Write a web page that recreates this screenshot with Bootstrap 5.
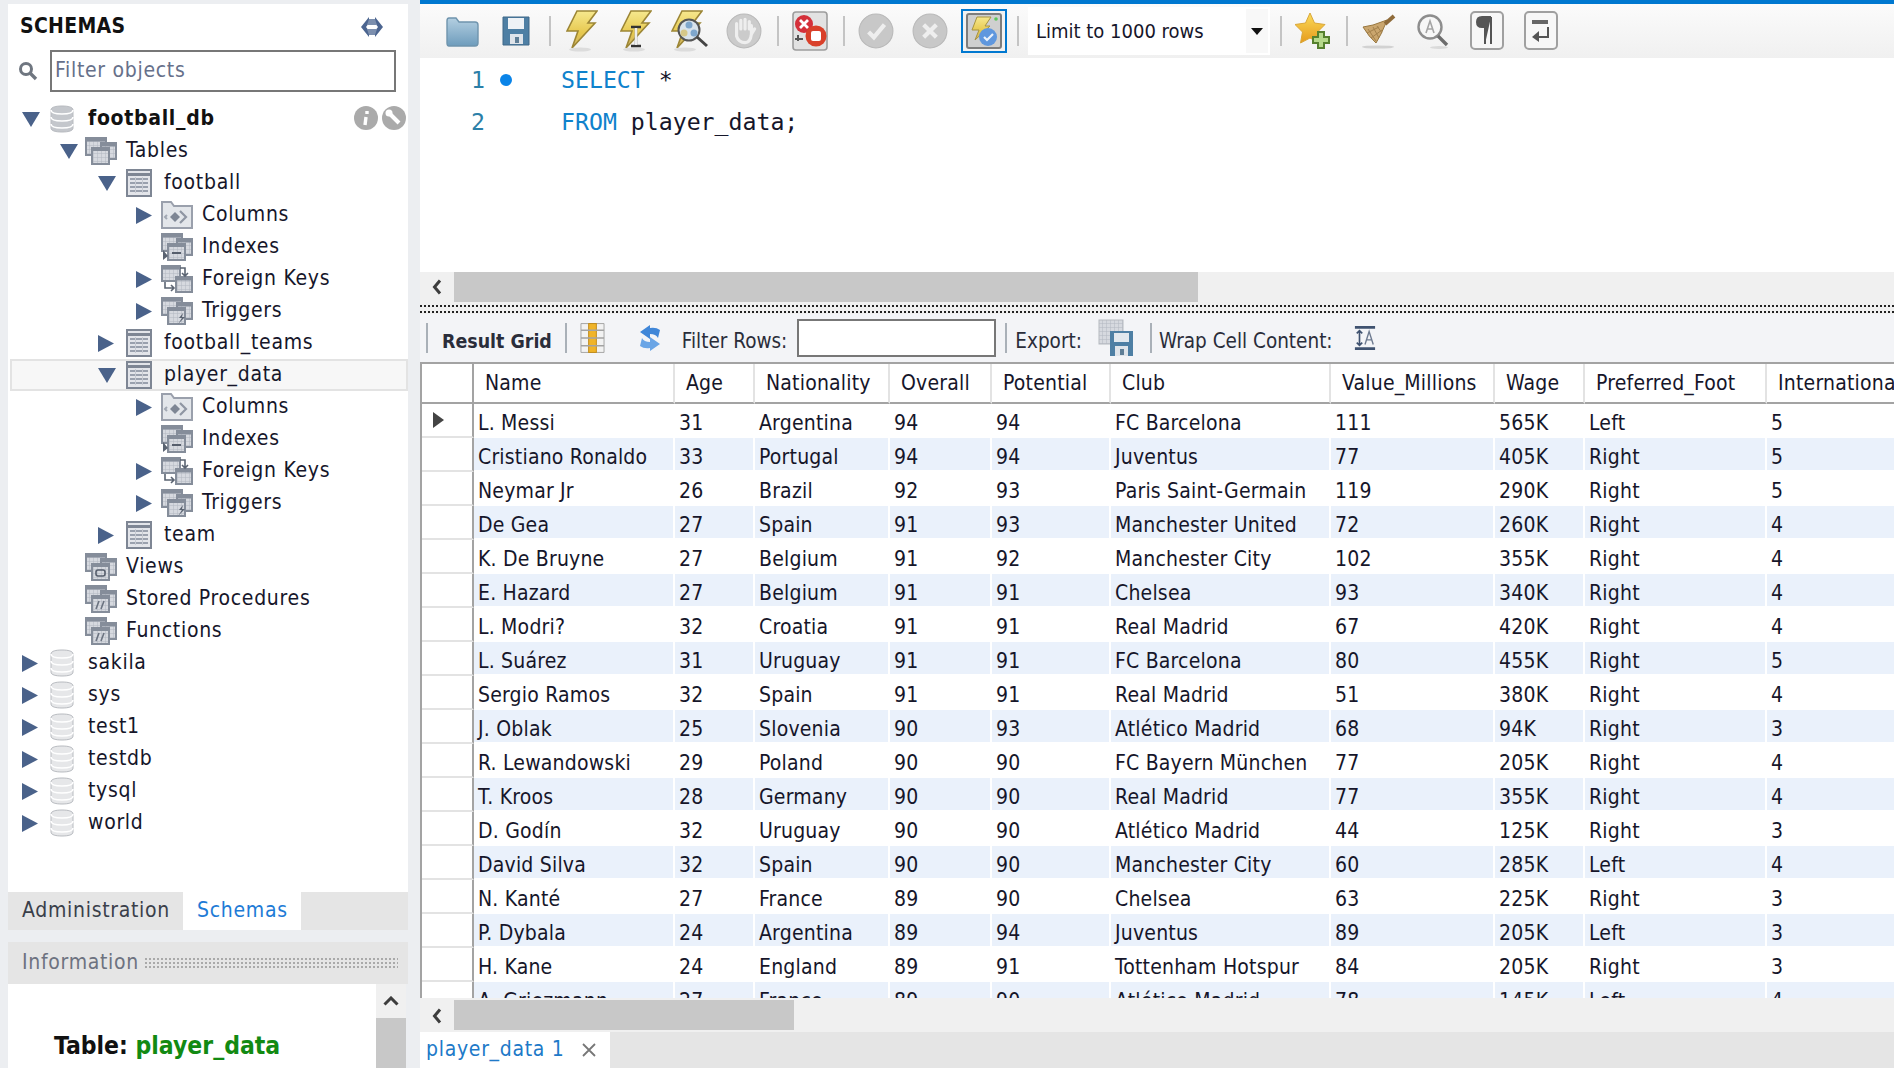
<!DOCTYPE html>
<html lang="en">
<head>
  <meta charset="UTF-8" />
  <meta name="viewport" content="width=device-width, initial-scale=1" />
  <title>MySQL Workbench</title>
  <link href="https://cdn.jsdelivr.net/npm/bootstrap@5.3.0/dist/css/bootstrap.min.css" rel="stylesheet" />
  <style>
    html, body { height: 100%; }
    body {
      background: #eceef1;
      color: #16162a;
      font-family: "DejaVu Sans Condensed", "DejaVu Sans", sans-serif;
      font-size: 21px;
      letter-spacing: .7px;
      overflow: hidden;
    }
    svg { display: block; flex: none; }
    .wb-shell { width: 1894px; height: 1068px; }

    /* left panel */
    .wb-side { width: 420px; padding: 4px 12px 0 8px; flex: none; }
    .wb-head { height: 46px; background: #fff; padding: 0 24px 0 12px; }
    .wb-head b { font-size: 21px; letter-spacing: .3px; color: #111; }
    .wb-filter { height: 51px; background: #fff; padding: 0 12px 9px 10px; gap: 12px; }
    .wb-filter .form-control {
      height: 42px; border: 2px solid #777; border-radius: 0; padding: 0 3px 2px;
      font-size: 21px; letter-spacing: .7px; color: #16162a; background: #fff; box-shadow: none;
    }
    .wb-filter .form-control::placeholder { color: #66708a; opacity: 1; }
    .wb-tree { background: #fff; height: 791px; padding-top: 2px; position: relative; }
    .wb-row { height: 32px; white-space: nowrap; }
    .wb-row.is-sel { background: #f7f7f7; box-shadow: inset 0 0 0 2px #e3e3e3; margin-left: 2px; }
    .wb-row.is-bold { font-weight: 700; color: #111; }
    .wb-arrow { width: 28px; }
    .wb-icon { width: 38px; }
    .wb-icon.is-wide svg { margin-left: -3px; }
    .wb-dbtools { position: absolute; top: 5px; right: 2px; gap: 4px; }

    .wb-tabs { height: 38px; background: #e5e5e5; }
    .wb-tabs .nav-link {
      height: 38px; padding: 0 13px 0 14px; line-height: 36px; border-radius: 0;
      color: #3a3f4a; font-size: 21px;
    }
    .wb-tabs .nav-link.active { background: #fff; color: #1e7bd6; }
    .wb-infohead { height: 42px; margin-top: 12px; background: #e5e5e5; padding: 0 10px 0 14px; gap: 5px; color: #6d7280; }
    .wb-dots {
      height: 12px; flex: 1;
      background-image: radial-gradient(circle, #a9a9a9 1px, transparent 1.2px);
      background-size: 4px 4px;
    }
    .wb-info { height: 84px; }
    .wb-infotext { background: #fff; width: 368px; padding: 48px 0 0 46px; font-size: 24.5px; letter-spacing: 0; font-weight: 700; color: #111; line-height: 28px; overflow: hidden; }
    .wb-infotext span { color: #128a12; }
    .wb-vscroll { width: 30px; background: #f0f0f0; }
    .wb-vscroll .wb-up { height: 34px; }
    .wb-vscroll .wb-thumb { background: #c8c8c8; }

    /* main column */
    .wb-main { width: 1474px; flex: none; background: #fff; }
    .wb-blue { height: 4px; background: #0078d0; }
    .wb-tools { height: 54px; padding-left: 15px; background: linear-gradient(#fbfbfb, #f0f0f0); }
    .wb-tbtn { width: 54px; height: 54px; padding: 0; border: 0; border-radius: 0; }
    .wb-tbtn.is-on .wb-onbox { width: 46px; height: 44px; border: 2px solid #0078d0; background: #f2f2f2; }
    .wb-vsep { width: 2px; height: 30px; background: #c4c4c4; margin: 0 4px 0 6px; }
    .wb-limit { width: 242px; height: 48px; margin: 0 4px 0 5px; background: #fff; padding-left: 8px; font-size: 20px; letter-spacing: 0; }
    .wb-limit i { width: 22px; height: 44px; margin-right: 2px; background: #f8f8f8; }
    .wb-editor { height: 214px; padding-top: 1px; font-family: "DejaVu Sans Mono", monospace; font-size: 23.2px; letter-spacing: 0; line-height: 42px; }
    .wb-lnum { width: 65px; text-align: right; color: #2c7fa8; }
    .wb-dotcol { width: 76px; padding-left: 15px; }
    .wb-dot { width: 12px; height: 12px; border-radius: 50%; background: #0a84e8; }
    .wb-kw { color: #0f82cc; }
    .wb-hscroll { background: #f0f0f0; }
    .wb-hscroll .wb-left { width: 34px; }
    .wb-hscroll .wb-thumb { background: #c8c8c8; }
    .wb-hs1 { height: 30px; }
    .wb-hs1 .wb-thumb { width: 744px; }
    .wb-split { height: 12px; background: #f0f0f0; padding-top: 3px; }
    .wb-split div { height: 8px; border-top: 2px dotted #222; border-bottom: 2px dotted #222; }

    .wb-rtools { height: 48px; background: #f3f4f7; font-size: 20.5px; letter-spacing: 0; color: #2a2d3a; padding-left: 6px; }
    .wb-rtools span, .wb-rtools b { padding-top: 7px; white-space: nowrap; }
    .wb-rtools b { font-size: 19.4px; }
    .wb-rsep { width: 2px; height: 30px; background: #a9b0b8; flex: none; }
    .wb-rtools .form-control { width: 199px; flex: none; height: 38px; border: 2px solid #777; border-radius: 0; background: #fff; box-shadow: none; }
    .rt-title { margin-left: 14px; }
    .rt-sep1 { margin-left: 13px; }
    .rt-form { margin-left: 13px; }
    .rt-refresh { margin-left: 29px; }
    .rt-filter { margin-left: 16px; }
    .rt-input { margin-left: 10px; }
    .rt-sep2 { margin-left: 9px; }
    .rt-export { margin-left: 8px; }
    .rt-exicon { margin-left: 16px; }
    .rt-sep3 { margin-left: 16px; }
    .rt-wrap { margin-left: 7px; }
    .rt-wricon { margin-left: 21px; }

    /* result grid */
    .wb-grid { height: 636px; overflow: hidden; border-left: 2px solid #a3a3a3; border-top: 2px solid #a3a3a3; }
    .wb-table { width: 1583px; table-layout: fixed; border-collapse: separate; border-spacing: 0; font-size: 21px; letter-spacing: .2px; color: #16162a; }
    .wb-table > thead > tr > th {
      height: 40px; padding: 0 0 3px 11px; font-weight: 400; background: #fff; box-shadow: none;
      border-right: 2px solid #e3e3e3; border-bottom: 2px solid #a3a3a3; white-space: nowrap; overflow: hidden; color: #16162a;
    }
    .wb-table > tbody > tr > td {
      height: 34px; padding: 6px 0 0 4px; line-height: 26px; background: #fff; box-shadow: none; color: #16162a;
      border-right: 2px solid #fff; border-bottom: 2px solid #fff; white-space: nowrap; overflow: hidden; vertical-align: top;
    }
    .wb-table > tbody > tr:nth-child(even) > td { background: #eaf1fb; }
    .wb-table > tbody > tr > td:first-child, .wb-table > tbody > tr:nth-child(even) > td:first-child {
      background: #fff; padding: 8px 0 0 11px; border-right: 2px solid #a3a3a3; border-bottom: 2px solid #e3e3e3;
    }
    .wb-table > thead > tr > th:first-child { border-right: 2px solid #a3a3a3; }
    .wb-hs2 { height: 34px; padding-top: 2px; }
    .wb-hs2 .wb-thumb { width: 340px; height: 30px; }
    .wb-qtabs { height: 36px; background: #e5e5e5; }
    .wb-qtab { width: 190px; background: #fff; color: #2079c8; padding-left: 6px; gap: 16px; }
  </style>
</head>
<body>
  <!-- icon sheet -->
  <svg width="0" height="0" style="position:absolute">
    <defs>
      <linearGradient id="gFolder" x1="0" y1="0" x2="0" y2="1"><stop offset="0" stop-color="#b4cfe1"/><stop offset="1" stop-color="#6e9cbc"/></linearGradient>
      <linearGradient id="gBolt" x1="0" y1="0" x2="0" y2="1"><stop offset="0" stop-color="#f6e88e"/><stop offset=".6" stop-color="#e6c84e"/><stop offset="1" stop-color="#cbb06a"/></linearGradient>
      <linearGradient id="gStar" x1="0" y1="0" x2="0" y2="1"><stop offset="0" stop-color="#fbdc5a"/><stop offset="1" stop-color="#e69a1c"/></linearGradient>
      <pattern id="pGrid" width="4" height="4" patternUnits="userSpaceOnUse"><rect width="4" height="4" fill="#d6d9df"/><path d="M4 0H0V4" fill="none" stroke="#b3b8c1" stroke-width="1"/></pattern>
    </defs>
    <symbol id="i-down" viewBox="0 0 18 15"><path d="M0 0H18L9 15Z" fill="#4a628a"/></symbol>
    <symbol id="i-right" viewBox="0 0 16 17"><path d="M0 0L16 8.5L0 17Z" fill="#4a628a"/></symbol>
    <symbol id="i-db" viewBox="0 0 24 28">
      <path d="M1 5C1 2 6 1 12 1S23 2 23 5V23C23 26 18 27 12 27S1 26 1 23Z" fill="currentColor" stroke="#b8bbc0"/>
      <path d="M1 5C1 8 6 9 12 9S23 8 23 5M1 12C1 15 6 16 12 16S23 15 23 12M1 19C1 22 6 23 12 23S23 22 23 19" fill="none" stroke="#fff" stroke-width="1.6"/>
    </symbol>
    <symbol id="i-table" viewBox="0 0 26 28">
      <rect x="1" y="1" width="24" height="26" fill="#e3e5ea" stroke="#7e8694" stroke-width="2"/>
      <path d="M2 5.500H24" stroke="#7e8694" stroke-width="3"/>
      <path d="M4 10H22M4 14H22M4 18H22M4 22H22" stroke="#9aa1ae" stroke-width="2"/>
      <path d="M9.500 8V24M16.500 8V24" stroke="#c6cad2" stroke-width="1"/>
    </symbol>
    <symbol id="i-group" viewBox="0 0 32 28">
      <rect x="1" y="1" width="20" height="17" fill="url(#pGrid)" stroke="#858d9a" stroke-width="2"/>
      <path d="M1 3H21" stroke="#858d9a" stroke-width="3"/>
      <rect x="16" y="6" width="15" height="16" fill="url(#pGrid)" stroke="#858d9a" stroke-width="2"/>
      <path d="M16 8H31" stroke="#858d9a" stroke-width="3"/>
      <rect x="7" y="11" width="17" height="16" fill="url(#pGrid)" stroke="#858d9a" stroke-width="2"/>
      <path d="M7 12.500H24" stroke="#858d9a" stroke-width="3"/>
    </symbol>
    <symbol id="i-columns" viewBox="0 0 32 28">
      <path d="M1 27V1H10L13 5H31V27Z" fill="#e3e6ea" stroke="#9aa0ac" stroke-width="2"/>
      <path d="M9 16L14 11L19 16L14 21Z" fill="#7e8694"/><path d="M19 10L25 16L19 22" fill="none" stroke="#8f96a3" stroke-width="2.200"/><path d="M6 14L4 16L6 18" fill="none" stroke="#a2a8b3" stroke-width="2"/>
    </symbol>
    <symbol id="i-indexes" viewBox="0 0 32 28">
      <use href="#i-group"/><path d="M11 20H20" stroke="#565e6c" stroke-width="2"/><path d="M2 17V27L7 23Z" fill="#5b6472"/>
    </symbol>
    <symbol id="i-fkeys" viewBox="0 0 32 28">
      <rect x="1" y="1" width="18" height="15" fill="url(#pGrid)" stroke="#858d9a" stroke-width="2"/>
      <path d="M1 3H19" stroke="#858d9a" stroke-width="3"/>
      <rect x="15" y="12" width="16" height="15" fill="url(#pGrid)" stroke="#858d9a" stroke-width="2"/>
      <path d="M15 14H31" stroke="#858d9a" stroke-width="3"/>
      <path d="M4 17V23H13M10 20L13 23L10 26M19 3H24V11M21 8L24 11L27 8" fill="none" stroke="#5b6472" stroke-width="1.600"/>
    </symbol>
    <symbol id="i-triggers" viewBox="0 0 32 28">
      <use href="#i-group"/><path d="M22 16L18 21H21L17 27L24 20H21Z" fill="#5b6472"/>
    </symbol>
    <symbol id="i-views" viewBox="0 0 32 28">
      <use href="#i-group"/><rect x="11" y="17" width="9" height="6" rx="2" fill="none" stroke="#565e6c" stroke-width="1.6"/>
    </symbol>
    <symbol id="i-procs" viewBox="0 0 32 28">
      <use href="#i-group"/><path d="M11 24L14 16M16 24L19 16" stroke="#6b7380" stroke-width="1.6"/>
    </symbol>
    <symbol id="i-sync" viewBox="0 0 24 22">
      <path d="M9 1L1 11L9 21V15L6 11L9 7ZM15 1L23 11L15 21V15L18 11L15 7Z" fill="#4c6590"/><path d="M9 3H15L17 9H7ZM7 13H17L15 19H9Z" fill="#7c8fae"/>
    </symbol>
    <symbol id="i-search" viewBox="0 0 20 20">
      <circle cx="8" cy="8" r="5.500" fill="none" stroke="#6f7680" stroke-width="3"/><path d="M12 12L18 18" stroke="#6f7680" stroke-width="3.400"/>
    </symbol>
    <symbol id="i-chev" viewBox="0 0 10 16"><path d="M8 1.500L2.500 8L8 14.500" fill="none" stroke="#3d3d3d" stroke-width="3"/></symbol>
    <symbol id="t-folder" viewBox="0 0 36 34">
      <path d="M3 7Q3 4 5 4H12L15 8H31Q34 8 34 11V29Q34 32 31 32H5Q3 32 3 29Z" fill="url(#gFolder)" stroke="#6f94ad" stroke-width="1.400"/>
    </symbol>
    <symbol id="t-save" viewBox="0 0 28 32">
      <path d="M1 2H27V30H1Z" fill="#4e7fa4" stroke="#3f6888"/><rect x="6" y="3" width="16" height="11" fill="#eef2f6"/><rect x="8" y="19" width="13" height="10" fill="#dfe4ea"/><rect x="13" y="22" width="4" height="6" fill="#5f7e96"/>
    </symbol>
    <symbol id="t-bolt" viewBox="0 0 32 42">
      <path d="M11 1H31L22 13H29L6 38L12 21H1Z" fill="url(#gBolt)" stroke="#9c8636" stroke-width="1.600"/><ellipse cx="14" cy="39.500" rx="11" ry="2" fill="#dcdcdc"/>
    </symbol>
    <symbol id="t-boltcur" viewBox="0 0 32 42">
      <use href="#t-bolt"/><path d="M11 17H21M16 17V35M11 36H21" stroke="#333" stroke-width="2.400"/><path d="M16 18V35" stroke="#eee" stroke-width="2.600"/>
    </symbol>
    <symbol id="t-boltmag" viewBox="0 0 38 42">
      <use href="#t-bolt" width="32" height="42"/><circle cx="18" cy="20" r="10.500" fill="#d9e3ec" stroke="#555" stroke-width="2"/><circle cx="18" cy="15" r="3.500" fill="#7ea6cc"/><circle cx="13" cy="23" r="3.500" fill="#d6c88a"/><circle cx="23" cy="23" r="3.500" fill="#7ea6cc"/><path d="M26 27L36 36" stroke="#444" stroke-width="3"/>
    </symbol>
    <symbol id="t-hand" viewBox="0 0 34 34">
      <circle cx="17" cy="17" r="16" fill="#cbcbcb" stroke="#b9b9b9"/><path d="M10 16V10M14 15V7M18 15V6M22 15V8M24 20L27 15M10 15V22Q12 28 18 28Q23 28 24 20V12" fill="none" stroke="#eee" stroke-width="3" stroke-linecap="round"/>
    </symbol>
    <symbol id="t-stop" viewBox="0 0 36 40">
      <rect x="1" y="1" width="34" height="38" rx="3" fill="#e2e2e2" stroke="#9d9d9d" stroke-width="1.600"/><circle cx="12" cy="13" r="9" fill="#d4303a"/><path d="M8 9L16 17M16 9L8 17" stroke="#fff" stroke-width="2.800"/><circle cx="24" cy="25" r="10.500" fill="#d9402a"/><rect x="19" y="20" width="10" height="10" rx="2" fill="#fff"/><path d="M6 30L6 24M3 28H11" stroke="#555" stroke-width="2"/>
    </symbol>
    <symbol id="t-check" viewBox="0 0 34 34">
      <circle cx="17" cy="17" r="16" fill="#c8c8c8" stroke="#b9b9b9"/><path d="M10 18L15 23L25 11" fill="none" stroke="#eee" stroke-width="4"/>
    </symbol>
    <symbol id="t-cross" viewBox="0 0 34 34">
      <circle cx="17" cy="17" r="16" fill="#c8c8c8" stroke="#b9b9b9"/><path d="M11 11L23 23M23 11L11 23" stroke="#eee" stroke-width="4"/>
    </symbol>
    <symbol id="t-auto" viewBox="0 0 36 36">
      <rect x="1" y="1" width="34" height="34" rx="2" fill="#cfcfcf" stroke="#7d7d7d" stroke-width="2"/>
      <path d="M11 4H25L19 13H24L9 27L13 17H6Z" fill="url(#gBolt)" stroke="#a7933f"/><circle cx="22" cy="24" r="9" fill="#5f97de"/><path d="M18 24L21 27L27 21" fill="none" stroke="#eaf2fc" stroke-width="2.200"/><circle cx="30" cy="6" r="1.800" fill="#5cc85c"/>
    </symbol>
    <symbol id="t-star" viewBox="0 0 36 38">
      <path d="M15 1L19.500 11L30 12.500L22.500 20L24.500 31L15 26L5.500 31L7.500 20L0 12.500L10.500 11Z" fill="url(#gStar)" stroke="#d9a73a"/><path d="M23 20H29V25H34V31H29V36H23V31H18V25H23Z" fill="#b5d98a" stroke="#55802e" stroke-width="2"/>
    </symbol>
    <symbol id="t-broom" viewBox="0 0 36 36">
      <path d="M26 7L12 12L2 14Q8 24 15 30L20 21L24 12Z" fill="#caa66e" stroke="#98773f"/><path d="M24 11L33 3" stroke="#8f6b3a" stroke-width="4"/><path d="M7 16L15 28M12 14L18 25M16 13L21 20M6 20L18 14M10 25L21 17" stroke="#a3814c"/><ellipse cx="17" cy="34" rx="16" ry="1.600" fill="#d2d2d2"/>
    </symbol>
    <symbol id="t-findA" viewBox="0 0 32 36">
      <circle cx="13" cy="14" r="11.500" fill="#f7f7f7" stroke="#8d8d8d" stroke-width="2.400"/><path d="M9 20L13 8L17 20M10.500 16H15.500" fill="none" stroke="#a5a5a5" stroke-width="1.600"/><path d="M21 23L30 32" stroke="#6d6d6d" stroke-width="3.400"/><ellipse cx="22" cy="34.500" rx="9" ry="1.400" fill="#dadada"/>
    </symbol>
    <symbol id="t-para" viewBox="0 0 34 40">
      <rect x="1" y="1" width="32" height="37" rx="4" fill="#f7f7f7" stroke="#a0a0a0" stroke-width="2"/><path d="M21 6H12Q7 6 7 11T12 16H15V33M21 6V33M15 6V33" fill="#555" stroke="#555" stroke-width="2"/>
    </symbol>
    <symbol id="t-wrap" viewBox="0 0 34 40">
      <rect x="1" y="1" width="32" height="37" rx="4" fill="#f7f7f7" stroke="#a0a0a0" stroke-width="2"/><path d="M8 11H24" stroke="#666" stroke-width="4"/><path d="M24 16V26H14" fill="none" stroke="#555" stroke-width="2"/><path d="M15 20L8 26L15 31Z" fill="#555"/>
    </symbol>
    <symbol id="t-form" viewBox="0 0 26 32">
      <path d="M1 1H25V31H1Z" fill="#f2f2f2" stroke="#a3a3a3"/><rect x="9" y="1" width="8" height="30" fill="#f0b429" stroke="#c08a18"/><path d="M1 8H25M1 16H25M1 24H25" stroke="#a3a3a3" stroke-width="1.600"/>
    </symbol>
    <symbol id="t-refresh" viewBox="0 0 32 32">
      <path d="M16 3L6 10L16 17V12Q22 12 24 16L26 8Q22 5 16 6Z" fill="#3f86d8"/><path d="M16 29L26 22L16 15V20Q10 20 8 16L6 24Q10 27 16 26Z" fill="#6aa5e6"/>
    </symbol>
    <symbol id="t-export" viewBox="0 0 36 38">
      <rect x="1" y="1" width="24" height="24" fill="url(#pGrid)" stroke="#b5b9c0"/><path d="M12 12H35V37H12Z" fill="#4e7fa4"/><rect x="16" y="14" width="15" height="9" fill="#e2e8ee"/><rect x="17" y="27" width="13" height="10" fill="#dfe4ea"/><rect x="22" y="30" width="4" height="6" fill="#5f7e96"/>
    </symbol>
    <symbol id="t-cellwrap" viewBox="0 0 24 26">
      <path d="M1 1.500H23M1 24.500H23" stroke="#3f5270" stroke-width="3"/><path d="M6 5V21M3 8L6 5L9 8M3 18L6 21L9 18" fill="none" stroke="#3f5270" stroke-width="1.800"/><path d="M12 20L16.500 6L21 20M13.500 15H19.500" fill="none" stroke="#6d7a90" stroke-width="1.500"/>
    </symbol>
  </svg>

  <div class="wb-shell d-flex">
    <aside class="wb-side d-flex flex-column">
      <div class="wb-head d-flex align-items-center justify-content-between">
        <b>SCHEMAS</b>
        <svg width="24" height="22"><use href="#i-sync"/></svg>
      </div>
      <div class="wb-filter d-flex align-items-center">
        <svg width="20" height="20"><use href="#i-search"/></svg>
        <input class="form-control" type="text" placeholder="Filter objects" />
      </div>
      <div class="wb-tree" id="tree">
        <div class="wb-dbtools d-flex">
          <svg width="24" height="24" viewBox="0 0 24 24"><circle cx="12" cy="12" r="12" fill="#aaa"/><path d="M13 5V8M12 11L11 19" stroke="#fff" stroke-width="3.400"/></svg>
          <svg width="24" height="24" viewBox="0 0 24 24"><circle cx="12" cy="12" r="12" fill="#aaa"/><path d="M7 7L17 17" stroke="#fff" stroke-width="4"/><circle cx="7" cy="7" r="3.500" fill="#fff"/></svg>
        </div>
      </div>
      <ul class="nav wb-tabs">
        <li class="nav-item"><a class="nav-link" href="#">Administration</a></li>
        <li class="nav-item"><a class="nav-link active" href="#">Schemas</a></li>
      </ul>
      <div class="wb-infohead d-flex align-items-center">
        <span>Information</span>
        <div class="wb-dots"></div>
      </div>
      <div class="wb-info d-flex">
        <div class="wb-infotext">Table: <span>player_data</span></div>
        <div class="wb-vscroll d-flex flex-column">
          <div class="wb-up d-flex align-items-center justify-content-center">
            <svg width="16" height="10" viewBox="0 0 16 10"><path d="M1.500 8.500L8 2L14.500 8.500" fill="none" stroke="#3d3d3d" stroke-width="3"/></svg>
          </div>
          <div class="wb-thumb flex-grow-1"></div>
        </div>
      </div>
    </aside>

    <main class="wb-main d-flex flex-column">
      <div class="wb-blue"></div>
      <div class="wb-tools d-flex align-items-center" id="tools"></div>

      <div class="wb-editor">
        <div class="d-flex"><div class="wb-lnum">1</div><div class="wb-dotcol d-flex align-items-center"><div class="wb-dot"></div></div><div><span class="wb-kw">SELECT</span> *</div></div>
        <div class="d-flex"><div class="wb-lnum">2</div><div class="wb-dotcol"></div><div><span class="wb-kw">FROM</span> player_data;</div></div>
      </div>
      <div class="wb-hscroll wb-hs1 d-flex">
        <div class="wb-left d-flex align-items-center justify-content-center"><svg width="10" height="16"><use href="#i-chev"/></svg></div>
        <div class="wb-thumb"></div>
      </div>
      <div class="wb-split"><div></div></div>

      <div class="wb-rtools d-flex align-items-center">
        <div class="wb-rsep"></div>
        <b class="rt-title">Result Grid</b>
        <div class="wb-rsep rt-sep1"></div>
        <svg class="rt-form" width="25" height="32"><use href="#t-form"/></svg>
        <svg class="rt-refresh" width="32" height="32"><use href="#t-refresh"/></svg>
        <span class="rt-filter">Filter Rows:</span>
        <input class="form-control rt-input" type="text" />
        <div class="wb-rsep rt-sep2"></div>
        <span class="rt-export">Export:</span>
        <svg class="rt-exicon" width="36" height="38"><use href="#t-export"/></svg>
        <div class="wb-rsep rt-sep3"></div>
        <span class="rt-wrap">Wrap Cell Content:</span>
        <svg class="rt-wricon" width="22" height="24"><use href="#t-cellwrap"/></svg>
      </div>

      <div class="wb-grid">
        <table class="table mb-0 wb-table">
          <colgroup id="cols"></colgroup>
          <thead><tr id="ghead"></tr></thead>
          <tbody id="gbody"></tbody>
        </table>
      </div>

      <div class="wb-hscroll wb-hs2 d-flex">
        <div class="wb-left d-flex align-items-center justify-content-center"><svg width="10" height="16"><use href="#i-chev"/></svg></div>
        <div class="wb-thumb"></div>
      </div>
      <div class="wb-qtabs d-flex">
        <div class="wb-qtab d-flex align-items-center">
          <span>player_data 1</span>
          <svg width="16" height="16" viewBox="0 0 16 16"><path d="M2 2L14 14M14 2L2 14" stroke="#777" stroke-width="1.800"/></svg>
        </div>
      </div>
    </main>
  </div>

  <script src="https://cdn.jsdelivr.net/npm/bootstrap@5.3.0/dist/js/bootstrap.bundle.min.js"></script>
  <script>
    const use = (id, w, h) => `<svg width="${w}" height="${h}"><use href="#${id}"/></svg>`;

    // level, arrow (d/r/none), icon, label
    const treeRows = [
      [0, 'd', 'db', 'football_db', 'is-bold'],
      [1, 'd', 'group', 'Tables'],
      [2, 'd', 'table', 'football'],
      [3, 'r', 'columns', 'Columns'],
      [3, '', 'indexes', 'Indexes'],
      [3, 'r', 'fkeys', 'Foreign Keys'],
      [3, 'r', 'triggers', 'Triggers'],
      [2, 'r', 'table', 'football_teams'],
      [2, 'd', 'table', 'player_data', 'is-sel'],
      [3, 'r', 'columns', 'Columns'],
      [3, '', 'indexes', 'Indexes'],
      [3, 'r', 'fkeys', 'Foreign Keys'],
      [3, 'r', 'triggers', 'Triggers'],
      [2, 'r', 'table', 'team'],
      [1, '', 'views', 'Views'],
      [1, '', 'procs', 'Stored Procedures'],
      [1, '', 'procs', 'Functions'],
      [0, 'r', 'db', 'sakila'],
      [0, 'r', 'db', 'sys'],
      [0, 'r', 'db', 'test1'],
      [0, 'r', 'db', 'testdb'],
      [0, 'r', 'db', 'tysql'],
      [0, 'r', 'db', 'world']
    ];
    const iconSize = { db: [24, 28], table: [26, 28] };
    const treeEl = document.getElementById('tree');
    treeRows.forEach(([lvl, arrow, icon, label, cls]) => {
      const row = document.createElement('div');
      row.className = 'wb-row d-flex align-items-center ' + (cls || '');
      row.style.paddingLeft = (14 + lvl * 38 - (cls === 'is-sel' ? 2 : 0)) + 'px';
      const [w, h] = iconSize[icon] || [32, 28];
      const arrowSvg = arrow === 'd' ? use('i-down', 18, 15) : arrow === 'r' ? use('i-right', 16, 17) : '';
      const dbColor = cls === 'is-bold' ? 'color:#c4c7cc' : 'color:#e6e7e9';
      row.innerHTML = `<div class="wb-arrow">${arrowSvg}</div>
        <div class="wb-icon ${iconSize[icon] ? '' : 'is-wide'}" style="${icon === 'db' ? dbColor : ''}">${use('i-' + icon, w, h)}</div>
        <div>${label}</div>`;
      treeEl.appendChild(row);
    });

    // main toolbar, left to right
    const tools = [
      ['t-folder', 36, 34], ['t-save', 28, 32], '|',
      ['t-bolt', 32, 42], ['t-boltcur', 32, 42], ['t-boltmag', 38, 42], ['t-hand', 36, 36], '|',
      ['t-stop', 36, 40], '|',
      ['t-check', 36, 36], ['t-cross', 36, 36], 'on', '|', 'limit', '|',
      ['t-star', 36, 38], '|',
      ['t-broom', 36, 36], ['t-findA', 32, 36], ['t-para', 34, 40], ['t-wrap', 34, 40]
    ];
    const toolsEl = document.getElementById('tools');
    tools.forEach(t => {
      if (t === '|') {
        toolsEl.insertAdjacentHTML('beforeend', '<div class="wb-vsep"></div>');
      } else if (t === 'limit') {
        toolsEl.insertAdjacentHTML('beforeend', `<div class="wb-limit d-flex align-items-center justify-content-between"><span>Limit to 1000 rows</span>
          <i class="d-flex align-items-center justify-content-center"><svg width="12" height="7" viewBox="0 0 12 7"><path d="M0 0H12L6 7Z" fill="#111"/></svg></i></div>`);
      } else if (t === 'on') {
        toolsEl.insertAdjacentHTML('beforeend', `<button class="btn wb-tbtn is-on d-flex align-items-center justify-content-center"><span class="wb-onbox d-flex align-items-center justify-content-center">${use('t-auto', 36, 36)}</span></button>`);
      } else {
        toolsEl.insertAdjacentHTML('beforeend', `<button class="btn wb-tbtn d-flex align-items-center justify-content-center">${use(t[0], t[1], t[2])}</button>`);
      }
    });

    // result grid
    const colWidths = [52, 201, 80, 135, 102, 119, 220, 164, 90, 182, 238];
    document.getElementById('cols').innerHTML = colWidths.map(w => `<col style="width:${w}px">`).join('');
    const headers = ['', 'Name', 'Age', 'Nationality', 'Overall', 'Potential', 'Club', 'Value_Millions', 'Wage', 'Preferred_Foot', 'International_Reputation'];
    document.getElementById('ghead').innerHTML = headers.map(h => `<th>${h}</th>`).join('');
    const players = [
      ['L. Messi', 31, 'Argentina', 94, 94, 'FC Barcelona', 111, '565K', 'Left', 5],
      ['Cristiano Ronaldo', 33, 'Portugal', 94, 94, 'Juventus', 77, '405K', 'Right', 5],
      ['Neymar Jr', 26, 'Brazil', 92, 93, 'Paris Saint-Germain', 119, '290K', 'Right', 5],
      ['De Gea', 27, 'Spain', 91, 93, 'Manchester United', 72, '260K', 'Right', 4],
      ['K. De Bruyne', 27, 'Belgium', 91, 92, 'Manchester City', 102, '355K', 'Right', 4],
      ['E. Hazard', 27, 'Belgium', 91, 91, 'Chelsea', 93, '340K', 'Right', 4],
      ['L. Modri?', 32, 'Croatia', 91, 91, 'Real Madrid', 67, '420K', 'Right', 4],
      ['L. Suárez', 31, 'Uruguay', 91, 91, 'FC Barcelona', 80, '455K', 'Right', 5],
      ['Sergio Ramos', 32, 'Spain', 91, 91, 'Real Madrid', 51, '380K', 'Right', 4],
      ['J. Oblak', 25, 'Slovenia', 90, 93, 'Atlético Madrid', 68, '94K', 'Right', 3],
      ['R. Lewandowski', 29, 'Poland', 90, 90, 'FC Bayern München', 77, '205K', 'Right', 4],
      ['T. Kroos', 28, 'Germany', 90, 90, 'Real Madrid', 77, '355K', 'Right', 4],
      ['D. Godín', 32, 'Uruguay', 90, 90, 'Atlético Madrid', 44, '125K', 'Right', 3],
      ['David Silva', 32, 'Spain', 90, 90, 'Manchester City', 60, '285K', 'Left', 4],
      ['N. Kanté', 27, 'France', 89, 90, 'Chelsea', 63, '225K', 'Right', 3],
      ['P. Dybala', 24, 'Argentina', 89, 94, 'Juventus', 89, '205K', 'Left', 3],
      ['H. Kane', 24, 'England', 89, 91, 'Tottenham Hotspur', 84, '205K', 'Right', 3],
      ['A. Griezmann', 27, 'France', 89, 90, 'Atlético Madrid', 78, '145K', 'Left', 4]
    ];
    const pointer = '<svg width="11" height="16" viewBox="0 0 11 16"><path d="M0 0L11 8L0 16Z" fill="#444"/></svg>';
    document.getElementById('gbody').innerHTML = players.map((p, i) =>
      `<tr><td>${i === 0 ? pointer : ''}</td>${p.map(v => `<td>${v}</td>`).join('')}</tr>`
    ).join('');
  </script>
</body>
</html>
